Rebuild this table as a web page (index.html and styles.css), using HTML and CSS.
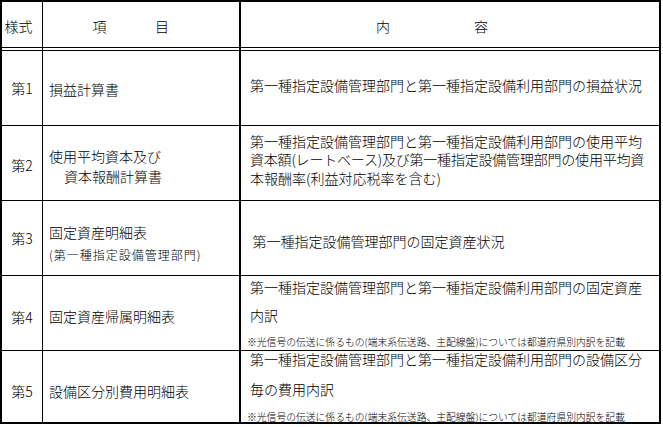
FILE: index.html
```html
<!DOCTYPE html>
<html lang="ja">
<head>
<meta charset="utf-8">
<title>様式一覧</title>
<link rel="stylesheet" href="styles.css">
</head>
<body>
<div class="sheet">
  <div class="cell c1 head"><span class="ln">様式</span></div>
  <div class="cell c2 head head-item"><span class="ln">項</span><span class="ln">目</span></div>
  <div class="cell c3 head head-content"><span class="ln">内</span><span class="ln">容</span></div>

  <div class="spacer"></div>
  <div class="spacer"></div>
  <div class="spacer c3"></div>

  <div class="cell c1 r1a"><span class="ln">第1</span></div>
  <div class="cell c2 r1b"><span class="ln">損益計算書</span></div>
  <div class="cell c3 r1c"><span class="ln">第一種指定設備管理部門と第一種指定設備利用部門の損益状況</span></div>

  <div class="cell c1 r2a"><span class="ln">第2</span></div>
  <div class="cell c2 r2b"><span class="ln">使用平均資本及び</span><span class="ln indent">資本報酬計算書</span></div>
  <div class="cell c3 r2c">
    <span class="ln">第一種指定設備管理部門と第一種指定設備利用部門の使用平均</span>
    <span class="ln tight">資本額(レートベース)及び第一種指定設備管理部門の使用平均資</span>
    <span class="ln">本報酬率(利益対応税率を含む)</span>
  </div>

  <div class="cell c1 r3a"><span class="ln">第3</span></div>
  <div class="cell c2 r3b"><span class="ln">固定資産明細表</span><span class="sub">(第一種指定設備管理部門)</span></div>
  <div class="cell c3 r3c"><span class="ln">第一種指定設備管理部門の固定資産状況</span></div>

  <div class="cell c1 r4a"><span class="ln">第4</span></div>
  <div class="cell c2 r4b"><span class="ln">固定資産帰属明細表</span></div>
  <div class="cell c3 r4c">
    <span class="ln">第一種指定設備管理部門と第一種指定設備利用部門の固定資産</span>
    <span class="ln">内訳</span>
    <span class="note">※光信号の伝送に係るもの(端末系伝送路、主配線盤)については都道府県別内訳を記載</span>
  </div>

  <div class="cell c1 r5a"><span class="ln">第5</span></div>
  <div class="cell c2 r5b"><span class="ln">設備区分別費用明細表</span></div>
  <div class="cell c3 r5c">
    <span class="ln">第一種指定設備管理部門と第一種指定設備利用部門の設備区分</span>
    <span class="ln">毎の費用内訳</span>
    <span class="note">※光信号の伝送に係るもの(端末系伝送路、主配線盤)については都道府県別内訳を記載</span>
  </div>
</div>
</body>
</html>
```

FILE: styles.css
```css
html, body {
  margin: 0;
  padding: 0;
  background: #fff;
}

body {
  font-family: "Noto Sans CJK JP", "Noto Sans", sans-serif;
  font-weight: 300;
  color: #000;
}

.sheet {
  display: grid;
  width: 657px;
  grid-template-columns: 40px 196px 419px;
  grid-template-rows: 45px 2px 74px 74px 74px 74px 71px;
  gap: 1px;
  padding: 2px;
  background: #000;
}

.cell,
.spacer {
  background: #fff;
}

.cell {
  display: flex;
  flex-direction: column;
  align-items: flex-start;
  overflow: visible;
}

.c3 {
  border-left: 1px solid #000;
}

.ln {
  display: block;
  font-size: 14px;
  line-height: 14px;
  white-space: nowrap;
}

/* column 1 */
.c1 {
  align-items: center;
}

/* column 2 */
.c2 {
  padding-left: 6px;
}
.indent {
  margin-left: 15px;
}
.sub {
  display: block;
  font-size: 12px;
  line-height: 12px;
  letter-spacing: 1px;
  white-space: nowrap;
}

/* column 3 */
.c3 {
  padding-left: 9px;
}
.note {
  display: block;
  font-size: 9.8px;
  line-height: 9.8px;
  white-space: nowrap;
  margin-left: -3px;
}
.tight {
  letter-spacing: -0.2px;
}

/* header */
.cell.head {
  flex-direction: row;
  padding-top: 17px;
}
.c1.head {
  align-items: flex-start;
  padding-left: 2.5px;
}
.c2.head-item {
  padding-left: 49.5px;
  gap: 48.5px;
}
.c3.head-content {
  padding-left: 135px;
  gap: 84px;
}

/* row 1 */
.r1a { padding-top: 30px; }
.r1b { padding-top: 31px; }
.r1c { padding-top: 27px; }

/* row 2 */
.r2a { padding-top: 32px; }
.r2b { padding-top: 23px; }
.r2b .indent { margin-top: 6px; }
.r2c { padding-top: 8px; }
.r2c .ln + .ln { margin-top: 4.4px; }

/* row 3 */
.r3a { padding-top: 30px; }
.r3b { padding-top: 24px; }
.r3b .sub { margin-top: 10.3px; }
.c3.r3c { padding-top: 33px; padding-left: 11.5px; }

/* row 4 */
.r4a { padding-top: 34px; }
.r4b { padding-top: 33px; }
.r4c { padding-top: 4px; }
.r4c .ln + .ln { margin-top: 14.3px; }
.r4c .note { margin-top: 15.4px; }

/* row 5 */
.r5a { padding-top: 33px; }
.r5b { padding-top: 33px; }
.r5c { padding-top: 1.3px; }
.r5c .ln + .ln { margin-top: 16px; }
.r5c .note { margin-top: 17.1px; }
```
